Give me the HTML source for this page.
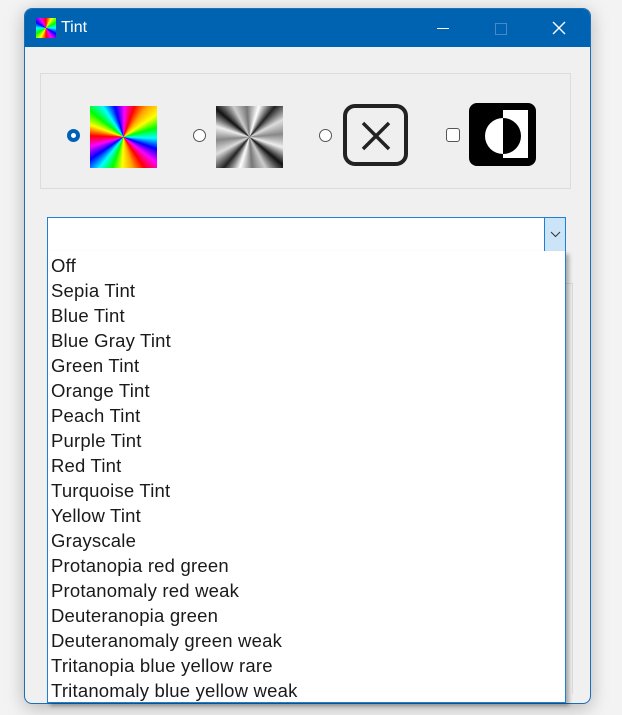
<!DOCTYPE html>
<html><head><style>
body{margin:0;width:622px;height:715px;background:#f3f3f3;position:relative;overflow:hidden;font-family:"Segoe UI","Liberation Sans",sans-serif}
.win{position:absolute;left:24px;top:8px;width:565px;height:694px;border:1px solid #1a6fb8;border-radius:8px;background:#f0f0f0;box-shadow:0 4px 18px rgba(0,0,0,.25);overflow:hidden}
.title{position:absolute;left:0;top:0;right:0;height:38px;background:#0063b1;color:#fff;font-size:16px}
.group{position:absolute;left:15px;top:64px;width:531px;height:116px;border:1px solid #dcdcdc;box-sizing:border-box}
.radio{position:absolute;width:13px;height:13px;border-radius:50%;border:1px solid #555;box-sizing:border-box;background:#fff}
.combo{position:absolute;left:47px;top:217px;width:519px;height:35px;border:1px solid #1f7fd6;box-sizing:border-box;background:#fff}
.list{position:absolute;left:47px;top:251px;width:519px;height:452px;border:1px solid #1f7fd6;border-top:none;box-sizing:border-box;background:#fff;box-shadow:3px 3px 4px rgba(0,0,0,.3);padding-top:2px}
.list div{height:25px;line-height:25px;font-size:18.5px;color:#1a1a1a;padding-left:3px;font-family:"Liberation Sans",sans-serif;letter-spacing:0.2px}
</style></head><body>
<div class="win">
 <div class="title">
  <div style="position:absolute;left:11px;top:9px;width:20px;height:20px;background:conic-gradient(red,yellow,lime,cyan,blue,magenta,red,yellow,lime,cyan,blue,magenta,red)"></div>
  <span style="position:absolute;left:36px;top:10px;font-family:'Liberation Sans',sans-serif">Tint</span>
  <div style="position:absolute;left:412px;top:19px;width:12px;height:1px;background:#fff"></div>
  <div style="position:absolute;left:470px;top:14px;width:10px;height:10px;border:1px solid #4a88c8"></div>
  <svg style="position:absolute;left:527px;top:12px" width="14" height="14"><path d="M1 1L13 13M13 1L1 13" stroke="#fff" stroke-width="1.4"/></svg>
 </div>
 <div class="group" style="background:#efefef"></div>
</div>
<div class="radio" style="left:67px;top:129px;border:4px solid #0060b5"></div>
<div style="position:absolute;left:90px;top:106px;width:67px;height:62px;background:conic-gradient(from 20deg,red,orange,yellow,lime,cyan,blue,magenta,red,orange,yellow,lime,cyan,blue,magenta,red,yellow,lime,cyan,blue,magenta,red)"></div>
<div class="radio" style="left:193px;top:129px"></div>
<div style="position:absolute;left:216px;top:106px;width:67px;height:62px;background:conic-gradient(from 40deg,#222,#ddd,#888,#eee,#111,#ccc,#777,#fff,#222,#ddd,#888,#eee,#111,#ccc,#777,#fff,#222)"></div>
<div class="radio" style="left:319px;top:129px"></div>
<div style="position:absolute;left:343px;top:104px;width:65px;height:62px;border:4px solid #222;border-radius:12px;box-sizing:border-box"></div>
<svg style="position:absolute;left:360px;top:120px" width="32" height="32"><path d="M3 3L29 29M29 3L3 29" stroke="#222" stroke-width="3.5"/></svg>
<div style="position:absolute;left:446px;top:128px;width:14px;height:14px;border:1px solid #555;border-radius:3px;box-sizing:border-box;background:#fff"></div>
<div style="position:absolute;left:469px;top:103px;width:67px;height:63px;background:#000;border-radius:8px"></div>
<div style="position:absolute;left:503px;top:110px;width:25px;height:48px;background:#fff"></div>
<svg style="position:absolute;left:481px;top:116px" width="40" height="40"><path d="M22 2A18 18 0 0 0 22 38Z" fill="#fff"/><path d="M22 2A18 18 0 0 1 22 38Z" fill="#000"/></svg>
<div class="combo"><div style="position:absolute;right:0;top:0;width:20px;height:33px;background:#cce4f7;border-left:1px solid #1f7fd6"></div>
<svg style="position:absolute;right:4px;top:13px" width="11" height="7"><path d="M1 1L5.5 5.5L10 1" stroke="#333" fill="none"/></svg></div>
<div style="position:absolute;left:566px;top:283px;width:6px;height:410px;border-right:1px solid #ddd;border-top:1px solid #ddd"></div>
<div class="list">
<div>Off</div><div>Sepia Tint</div><div>Blue Tint</div><div>Blue Gray Tint</div><div>Green Tint</div><div>Orange Tint</div><div>Peach Tint</div><div>Purple Tint</div><div>Red Tint</div><div>Turquoise Tint</div><div>Yellow Tint</div><div>Grayscale</div><div>Protanopia red green</div><div>Protanomaly red weak</div><div>Deuteranopia green</div><div>Deuteranomaly green weak</div><div>Tritanopia blue yellow rare</div><div>Tritanomaly blue yellow weak</div>
</div>
</body></html>
